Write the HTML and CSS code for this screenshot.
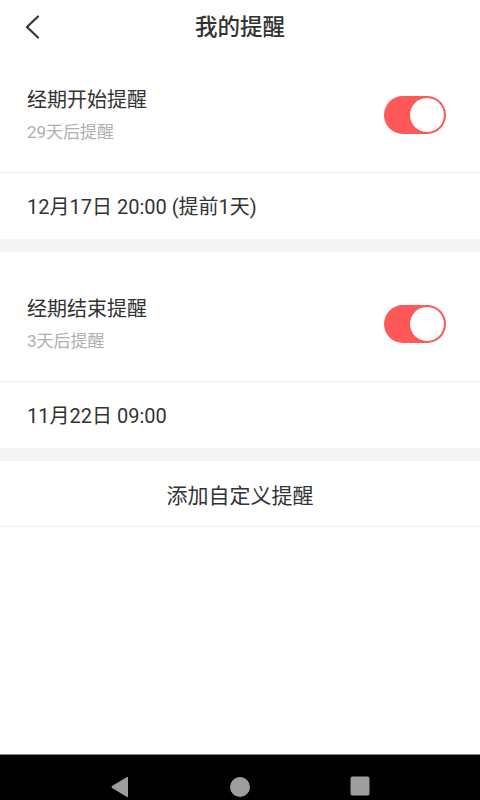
FILE: index.html
```html
<!DOCTYPE html>
<html lang="zh-CN">
<head>
<meta charset="utf-8">
<title>我的提醒</title>
<link rel="stylesheet" href="styles.css">
</head>
<body>
<div class="app">
  <main class="main">
    <header class="header">
      <div class="header-left">
        <svg class="back" width="16" height="24" viewBox="0 0 16 24"><path d="M14 1.5 L3 12 L14 22.5" fill="none" stroke="#333" stroke-width="2.2" stroke-linecap="round" stroke-linejoin="round"/></svg>
      </div>
      <h1 class="title">我的提醒</h1>
      <div class="header-right"></div>
    </header>

    <section class="card">
      <div class="toggle-row first">
        <div class="texts">
          <div class="row-title">经期开始提醒</div>
          <div class="row-sub">29天后提醒</div>
        </div>
        <div class="switch on"><div class="knob"></div></div>
      </div>
      <div class="date-row">12月17日 20:00 (提前1天)</div>
    </section>

    <div class="gap"></div>

    <section class="card">
      <div class="toggle-row">
        <div class="texts">
          <div class="row-title">经期结束提醒</div>
          <div class="row-sub">3天后提醒</div>
        </div>
        <div class="switch on"><div class="knob"></div></div>
      </div>
      <div class="date-row">11月22日 09:00</div>
    </section>

    <div class="gap"></div>

    <div class="add-row">添加自定义提醒</div>
  </main>

  <nav class="navbar">
    <div class="nav-slot">
      <svg width="20" height="22" viewBox="0 0 20 22"><path d="M18 1.5 L18 20.5 Q18 21.5 17 21 L2 12 Q1 11 2 10 L17 1 Q18 0.5 18 1.5 Z" fill="#9e9e9e"/></svg>
    </div>
    <div class="nav-slot">
      <svg width="22" height="22" viewBox="0 0 22 22"><circle cx="11" cy="11" r="10" fill="#9e9e9e"/></svg>
    </div>
    <div class="nav-slot">
      <svg width="20" height="20" viewBox="0 0 20 20"><rect x="0.5" y="0.5" width="19" height="19" rx="2" fill="#9e9e9e"/></svg>
    </div>
  </nav>
</div>
</body>
</html>
```

FILE: styles.css
```css
* { box-sizing: border-box; }
html, body { margin: 0; padding: 0; }
body {
  font-family: Roboto, "Noto Sans CJK SC", "Noto Sans", sans-serif;
  color: #333;
  background: #fff;
}
.app {
  width: 480px;
  height: 800px;
  display: flex;
  flex-direction: column;
  overflow: hidden;
}
.main {
  flex: 1;
  display: flex;
  flex-direction: column;
}
.header {
  height: 56px;
  display: grid;
  grid-template-columns: 1fr auto 1fr;
  align-items: center;
}
.header-left {
  display: flex;
  align-items: center;
  padding-left: 24px;
  padding-bottom: 2px;
}
.back { display: block; }
.title {
  margin: 0;
  font-size: 22.5px;
  font-weight: 500;
  line-height: 30px;
  color: #333;
  padding-bottom: 2px;
}
.card { background: #fff; }
.toggle-row {
  display: flex;
  align-items: center;
  justify-content: space-between;
  padding: 43px 34px 28px 27px;
}
.toggle-row.first { padding-top: 30px; }
.texts {
  display: flex;
  flex-direction: column;
  gap: 6px;
}
.row-title {
  font-size: 20px;
  line-height: 28px;
  color: #333;
}
.row-sub {
  font-size: 17px;
  line-height: 24px;
  color: #b0b0b0;
}
.switch {
  width: 62px;
  height: 38px;
  border-radius: 19px;
  background: #fe5858;
  display: flex;
  align-items: center;
  padding: 0 1px;
}
.switch.on { justify-content: flex-end; }
.knob {
  width: 36px;
  height: 36px;
  border-radius: 50%;
  background: #fff;
  border: 1.5px solid #ff4a4a;
}
.date-row {
  border-top: 1px solid #f0f0f0;
  height: 67px;
  display: flex;
  align-items: center;
  padding: 0 27px 1px;
  font-size: 20px;
  color: #333;
}
.gap {
  height: 13px;
  background: #f4f4f4;
}
.add-row {
  height: 66px;
  border-bottom: 1px solid #efefef;
  display: flex;
  align-items: center;
  justify-content: center;
  font-size: 21px;
  color: #333;
  padding-top: 1px;
}
.navbar {
  height: 46px;
  background: #000;
  border-top: 1px solid #8a8a8a;
  display: flex;
  justify-content: center;
  align-items: flex-start;
  gap: 80px;
  padding-top: 21px;
}
.nav-slot {
  width: 40px;
  display: flex;
  justify-content: center;
}
.nav-slot svg { display: block; }
```
